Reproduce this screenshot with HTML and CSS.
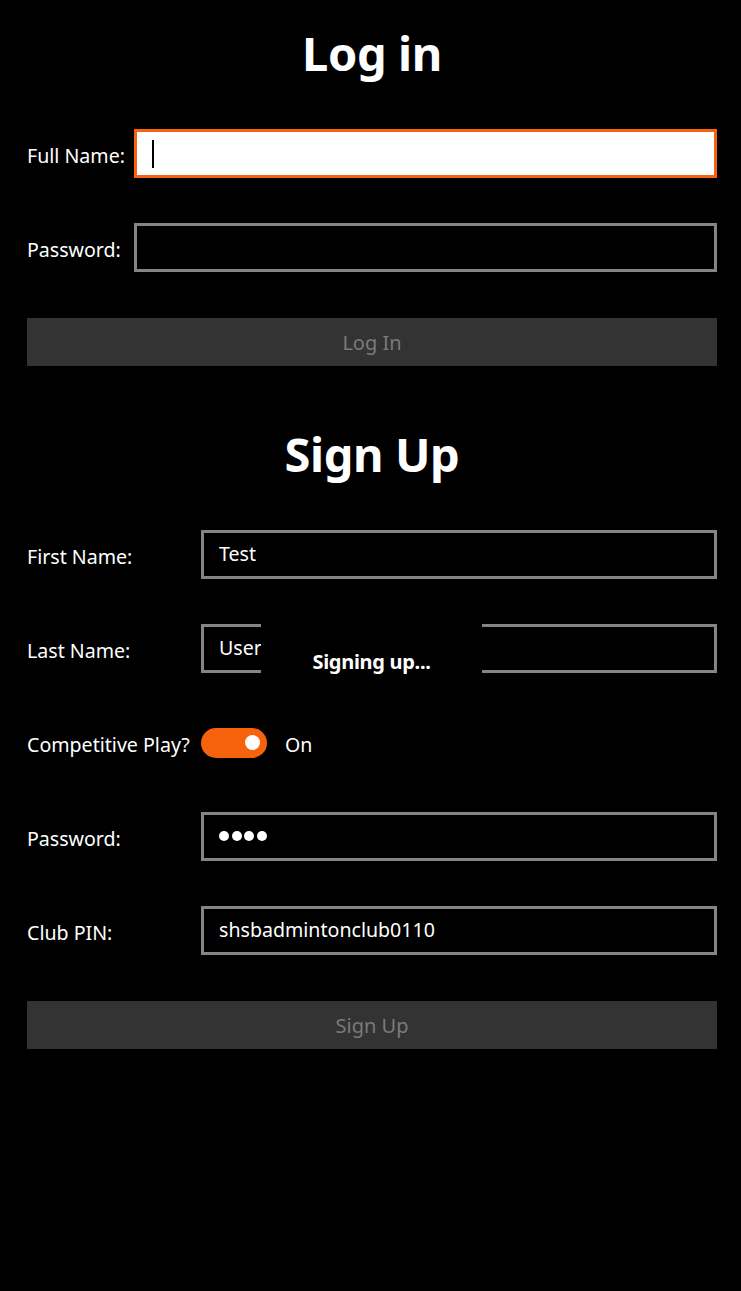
FILE: index.html
```html
<!DOCTYPE html>
<html lang="en">
<head>
<meta charset="utf-8">
<title>Log in</title>
<link rel="stylesheet" href="styles.css">
</head>
<body>
<main class="page">
  <section class="login">
    <h1 class="title">Log in</h1>
    <div class="form form-login">
      <span class="label">Full Name:</span>
      <div class="field field-focus"><span class="caret"></span></div>
      <span class="label">Password:</span>
      <div class="field"></div>
    </div>
    <div class="btn">Log In</div>
  </section>
  <section class="signup">
    <h1 class="title title-signup">Sign Up</h1>
    <div class="form form-signup">
      <span class="label">First Name:</span>
      <div class="field">Test</div>
      <span class="label">Last Name:</span>
      <div class="field">User</div>
      <span class="label">Competitive Play?</span>
      <div class="toggle-row">
        <span class="toggle"><span class="knob"></span></span>
        <span class="toggle-text">On</span>
      </div>
      <span class="label">Password:</span>
      <div class="field"><span class="dot"></span><span class="dot"></span><span class="dot"></span><span class="dot"></span></div>
      <span class="label">Club PIN:</span>
      <div class="field">shsbadmintonclub0110</div>
    </div>
    <div class="btn">Sign Up</div>
  </section>
  <div class="overlay"><span class="overlay-text">Signing up...</span></div>
</main>
</body>
</html>
```
FILE: styles.css
```css
* { box-sizing: border-box; }
html, body {
  margin: 0;
  padding: 0;
  background: #000;
}
body {
  font-family: "Noto Sans", "Open Sans", sans-serif;
  color: #fff;
  width: 741px;
  height: 1291px;
  overflow: hidden;
}
.page {
  position: relative;
  padding: 25px 24px 0 27px;
}
.title {
  margin: 0 0 48px;
  height: 56px;
  line-height: 56px;
  font-size: 47px;
  font-weight: 700;
  text-align: center;
  letter-spacing: -0.4px;
}
.title-signup {
  margin-top: 60px;
  margin-bottom: 48px;
}
.form {
  display: grid;
  grid-auto-rows: 49px;
  row-gap: 45px;
  align-items: center;
}
.form-login { grid-template-columns: 107px 1fr; }
.form-signup { grid-template-columns: 174px 1fr; }
.label {
  font-size: 19.6px;
  white-space: nowrap;
  padding-top: 3px;
}
.field {
  height: 49px;
  border: 3px solid #848484;
  padding: 0 15px 2px;
  display: flex;
  align-items: center;
  font-size: 19.6px;
  color: #fff;
}
.field-focus {
  border-color: #f7630c;
  background: #fff;
  padding-bottom: 0;
}
.caret {
  display: inline-block;
  width: 2px;
  height: 28px;
  background: #000;
}
.dot {
  display: inline-block;
  width: 10px;
  height: 10px;
  border-radius: 50%;
  background: #fff;
  margin-right: 2.5px;
}
.btn {
  margin-top: 46px;
  height: 48px;
  background: #333;
  color: #7a7a7a;
  font-size: 20px;
  display: flex;
  align-items: center;
  justify-content: center;
}
.toggle-row {
  display: flex;
  align-items: center;
  gap: 18px;
}
.toggle {
  width: 66px;
  height: 30px;
  border-radius: 15px;
  background: #f7630c;
  display: flex;
  align-items: center;
  justify-content: flex-end;
  padding-right: 7px;
}
.knob {
  width: 15px;
  height: 15px;
  border-radius: 50%;
  background: #fff;
}
.toggle-text {
  font-size: 19.6px;
  padding-top: 3px;
}
.overlay {
  position: absolute;
  left: 261px;
  top: 616px;
  width: 221px;
  height: 90px;
  background: #000;
  display: flex;
  align-items: center;
  justify-content: center;
}
.overlay-text {
  font-size: 20px;
  font-weight: 700;
  letter-spacing: -0.3px;
}
```
